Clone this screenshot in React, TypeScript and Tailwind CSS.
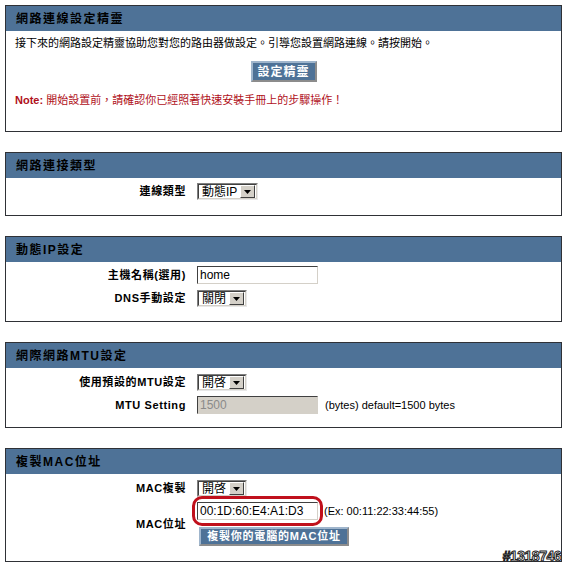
import React from "react";

const FONT = { fontFamily: '"Liberation Sans", "Noto Sans CJK TC", Arial, sans-serif' };

function Arrow() {
  return (
    <div className="flex h-full w-[15px] items-center justify-center border border-t-white border-l-white border-r-[#404040] border-b-[#404040] bg-[#d4d0c8]">
      <svg width="7" height="4" viewBox="0 0 7 4">
        <path d="M0 0H7L3.5 4Z" fill="#000" />
      </svg>
    </div>
  );
}

function Sel({ value, w }: { value: string; w: string }) {
  return (
    <div className={`flex h-[17px] ${w} items-stretch border border-t-[#808080] border-l-[#808080] border-r-[#e8e8e8] border-b-[#e8e8e8] bg-white`}>
      <div className="flex flex-1 items-center border border-t-[#404040] border-l-[#404040] border-r-[#d4d0c8] border-b-[#d4d0c8] pl-[3px] pr-[1px] text-[12px] leading-none text-black">
        <span className="flex-1">{value}</span>
        <div className="h-[13px]">
          <Arrow />
        </div>
      </div>
    </div>
  );
}

function Input({ value, h, disabled }: { value: string; h: string; disabled?: boolean }) {
  return (
    <div
      className={`flex ${h} w-[121px] items-center border border-t-[#404040] border-l-[#404040] border-r-[#d4d0c8] border-b-[#d4d0c8] pl-[2px] text-[12px] leading-none ${
        disabled ? "bg-[#d4d0c8] text-[#8a8a8a]" : "bg-white text-black"
      }`}
    >
      {value}
    </div>
  );
}

function Panel({ title, children }: { title: string; children: React.ReactNode }) {
  return (
    <div className="w-[557px] border border-[#2f3136] bg-white">
      <div className="flex h-[25px] items-center bg-[#4e7297] pl-[10px] text-[12px] font-bold tracking-[1.5px] text-black">
        {title}
      </div>
      {children}
    </div>
  );
}

function Label({ children }: { children: React.ReactNode }) {
  return (
    <div className="w-[180px] shrink-0 text-right text-[11px] font-bold tracking-[0.6px] text-black">{children}</div>
  );
}

export default function App() {
  return (
    <div className="relative h-[568px] w-[570px] overflow-hidden bg-white pl-[5px] pt-[5px]" style={FONT}>
      <div className="flex flex-col gap-[20px]">
        <Panel title="網路連線設定精靈">
          <div className="flex h-[100px] flex-col pt-[5px]">
            <div className="pl-[9px] text-[11px] leading-[14px] text-black">
              接下來的網路設定精靈協助您對您的路由器做設定。引導您設置網路連線。請按開始。
            </div>
            <div className="mt-[11px] flex justify-center">
              <div className="flex h-[21px] w-[66px] items-center justify-center border-2 border-t-[#9fb5cc] border-l-[#9fb5cc] border-r-[#8c8c8c] border-b-[#8c8c8c] bg-[#4e7297] text-[12px] font-bold tracking-[1px] text-white">
                設定精靈
              </div>
            </div>
            <div className="mt-[11px] pl-[9px] text-[11px] leading-[14px] text-[#b0101a]">
              <span className="font-bold">Note:</span> 開始設置前，請確認你已經照著快速安裝手冊上的步驟操作！
            </div>
          </div>
        </Panel>

        <Panel title="網路連接類型">
          <div className="h-[37px] pt-[5px]">
            <div className="flex items-center">
              <Label>連線類型</Label>
              <div className="ml-[11px]">
                <Sel value="動態IP" w="w-[61px]" />
              </div>
            </div>
          </div>
        </Panel>

        <Panel title="動態IP設定">
          <div className="flex h-[59px] flex-col gap-[6px] pt-[4px]">
            <div className="flex items-center">
              <Label>主機名稱(選用)</Label>
              <div className="ml-[11px]">
                <Input value="home" h="h-[18px]" />
              </div>
            </div>
            <div className="flex items-center">
              <Label>DNS手動設定</Label>
              <div className="ml-[11px]">
                <Sel value="關閉" w="w-[50px]" />
              </div>
            </div>
          </div>
        </Panel>

        <Panel title="網際網路MTU設定">
          <div className="flex h-[59px] flex-col gap-[5px] pt-[6px]">
            <div className="flex items-center">
              <Label>使用預設的MTU設定</Label>
              <div className="ml-[11px]">
                <Sel value="開啓" w="w-[50px]" />
              </div>
            </div>
            <div className="flex items-center">
              <Label>MTU Setting</Label>
              <div className="ml-[11px]">
                <Input value="1500" h="h-[18px]" disabled />
              </div>
              <div className="ml-[7px] text-[11px] text-black">(bytes) default=1500 bytes</div>
            </div>
          </div>
        </Panel>

        <Panel title="複製MAC位址">
          <div className="flex h-[87px] flex-col pt-[6px]">
            <div className="flex items-center">
              <Label>MAC複製</Label>
              <div className="ml-[11px]">
                <Sel value="開啓" w="w-[50px]" />
              </div>
            </div>
            <div className="mt-[5px] flex items-center">
              <Label>MAC位址</Label>
              <div className="ml-[11px] flex flex-col gap-[7px]">
                <div className="flex items-center">
                  <div className="relative">
                    <Input value="00:1D:60:E4:A1:D3" h="h-[18px]" />
                    <div className="pointer-events-none absolute left-[-5px] top-[-6px] h-[30px] w-[131px] rounded-[10px] border-[3px] border-[#c0101c]" />
                  </div>
                  <div className="ml-[6px] text-[11px] text-black">(Ex: 00:11:22:33:44:55)</div>
                </div>
                <div className="ml-[2px] flex h-[19px] w-[150px] items-center justify-center border-2 border-t-[#9fb5cc] border-l-[#9fb5cc] border-r-[#8c8c8c] border-b-[#8c8c8c] bg-[#4e7297] text-[11px] font-bold tracking-[0.8px] text-white">
                  複製你的電腦的MAC位址
                </div>
              </div>
            </div>
          </div>
        </Panel>
      </div>
      <div className="absolute bottom-[1px] right-[9px] text-[14px] font-bold tracking-[-0.5px] text-white [-webkit-text-stroke:1px_#222]">
        #1318746
      </div>
    </div>
  );
}
